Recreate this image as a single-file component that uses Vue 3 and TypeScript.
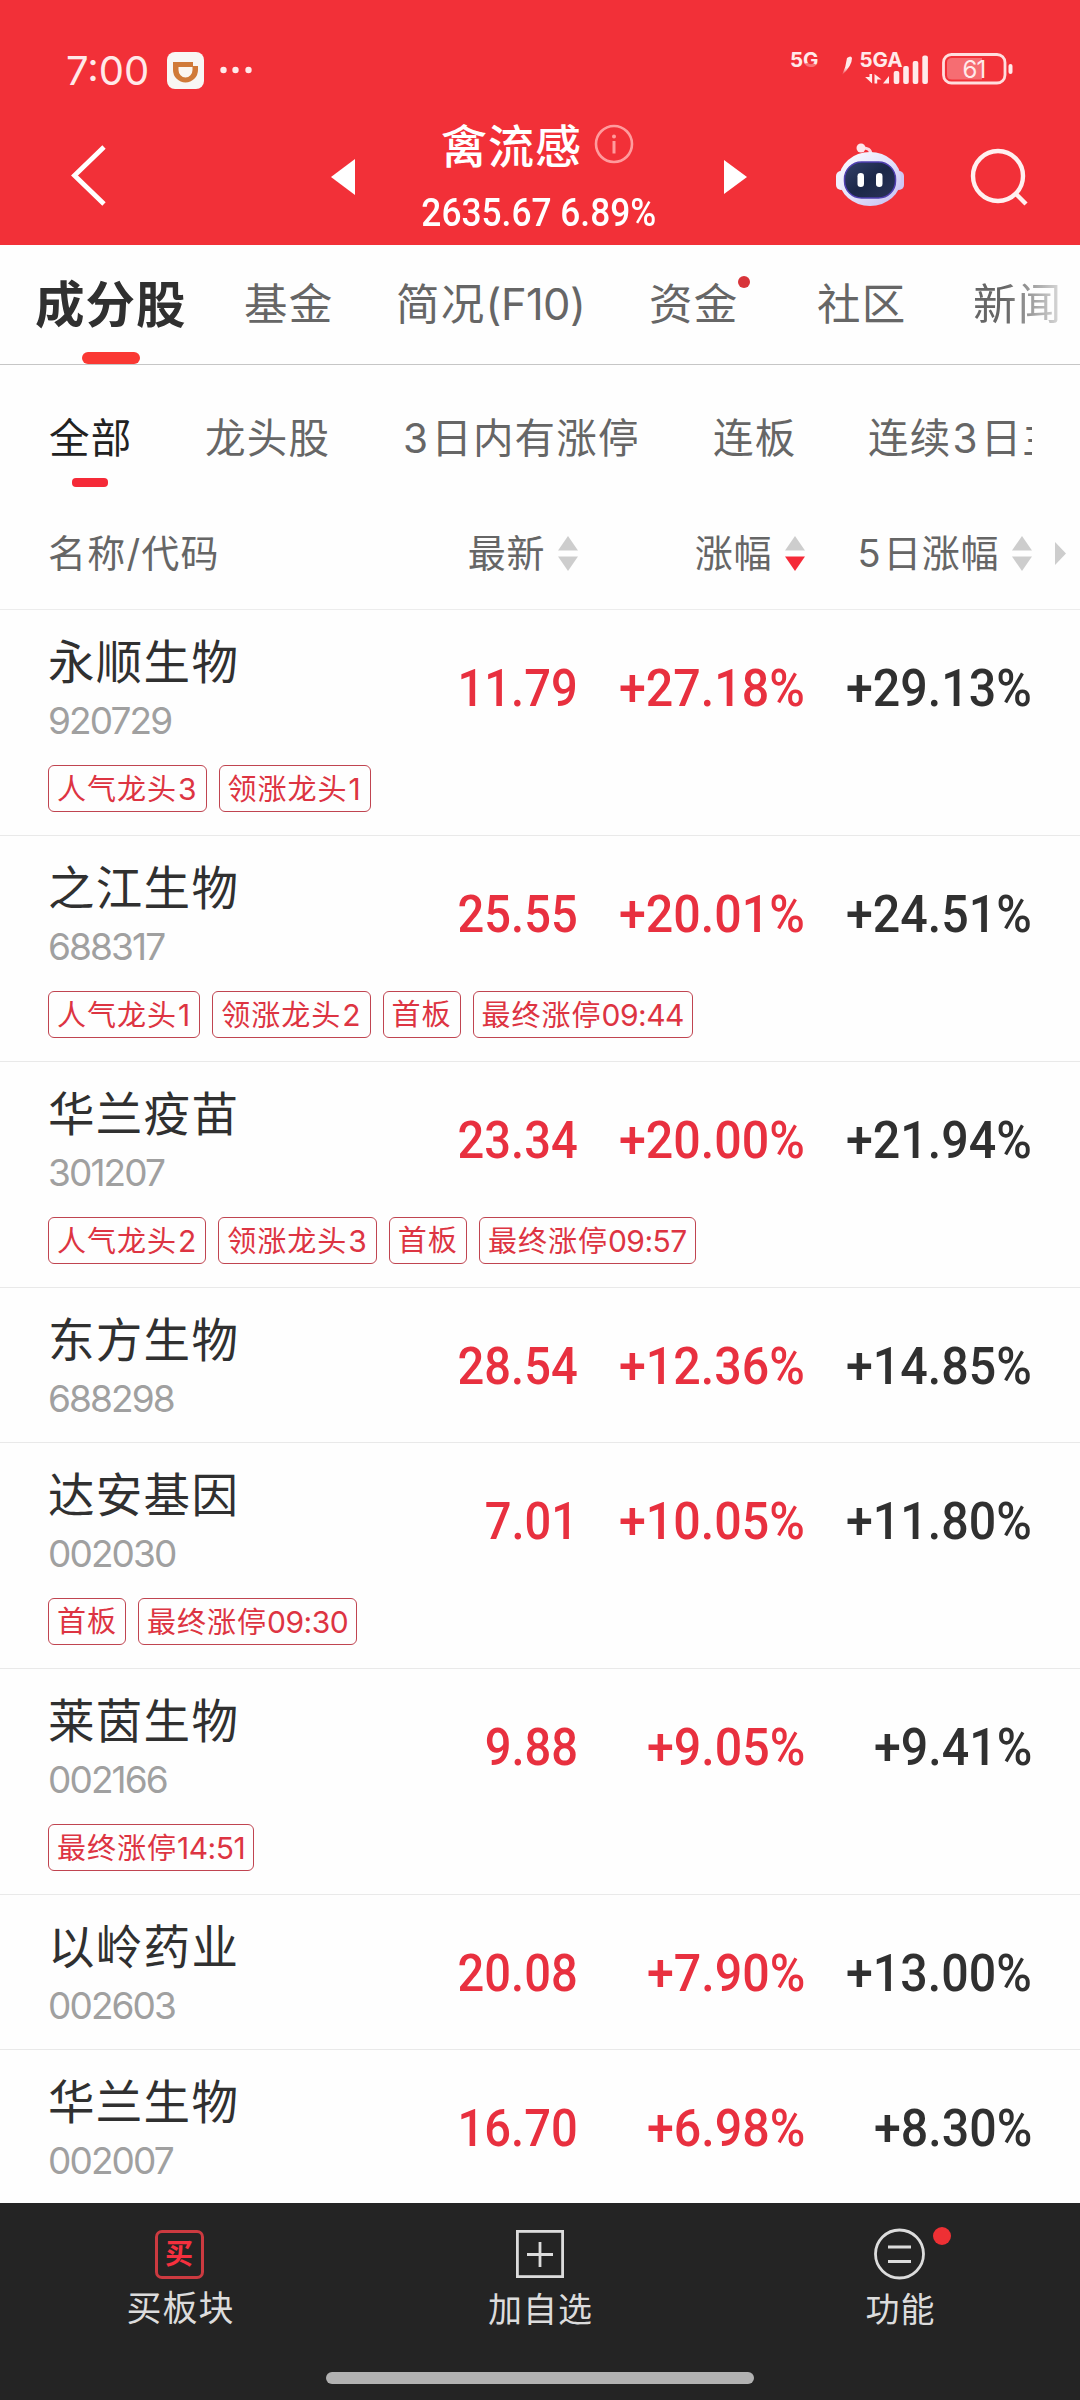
<script setup lang="ts">
interface Stock {
  name: string
  code: string
  price: string
  change: string
  change5: string
  tags: string[]
}

interface Segment {
  text: string
  latin: boolean
}

const tabs = [
  { label: '成分股', active: true },
  { label: '基金' },
  { label: '简况(F10)' },
  { label: '资金', dot: true },
  { label: '社区' },
  { label: '新闻' },
]

const filters = ['全部', '龙头股', '3日内有涨停', '连板', '连续3日主']

const columns = [
  { label: '最新', sorted: false },
  { label: '涨幅', sorted: true },
  { label: '5日涨幅', sorted: false },
]

const stocks: Stock[] = [
  { name: '永顺生物', code: '920729', price: '11.79', change: '+27.18%', change5: '+29.13%', tags: ['人气龙头3', '领涨龙头1'] },
  { name: '之江生物', code: '688317', price: '25.55', change: '+20.01%', change5: '+24.51%', tags: ['人气龙头1', '领涨龙头2', '首板', '最终涨停09:44'] },
  { name: '华兰疫苗', code: '301207', price: '23.34', change: '+20.00%', change5: '+21.94%', tags: ['人气龙头2', '领涨龙头3', '首板', '最终涨停09:57'] },
  { name: '东方生物', code: '688298', price: '28.54', change: '+12.36%', change5: '+14.85%', tags: [] },
  { name: '达安基因', code: '002030', price: '7.01', change: '+10.05%', change5: '+11.80%', tags: ['首板', '最终涨停09:30'] },
  { name: '莱茵生物', code: '002166', price: '9.88', change: '+9.05%', change5: '+9.41%', tags: ['最终涨停14:51'] },
  { name: '以岭药业', code: '002603', price: '20.08', change: '+7.90%', change5: '+13.00%', tags: [] },
  { name: '华兰生物', code: '002007', price: '16.70', change: '+6.98%', change5: '+8.30%', tags: [] },
]

// Splits a label into Chinese and Latin runs so each can be spaced separately.
function segments(label: string): Segment[] {
  return (label.match(/[\x20-\x7e]+|[^\x20-\x7e]+/g) ?? []).map((text) => ({
    text,
    latin: /^[\x20-\x7e]/.test(text),
  }))
}
</script>

<template>
  <div class="screen">
    <header class="top">
      <div class="status">
        <span class="clock">7:00</span>
        <svg class="app-badge" width="37" height="37" viewBox="0 0 37 37">
          <rect width="37" height="37" rx="8" fill="#f8f6f4" />
          <path d="M6 10H26V14H31V18A12.5 12.5 0 0 1 6 18Z" fill="#d07a38" />
          <path d="M11.500 15H25.500V18A7 7.500 0 0 1 11.500 18Z" fill="#fbf6f0" />
        </svg>
        <svg class="more" width="32" height="8" viewBox="0 0 32 8" fill="#ffe9e9">
          <circle cx="3.500" cy="4" r="3.200" /><circle cx="15.500" cy="4" r="3.200" /><circle cx="28.500" cy="4" r="3.200" />
        </svg>
        <svg class="signals" width="228" height="44" viewBox="788 46 228 44" fill="#ffeaea">
          <defs>
            <linearGradient id="fade" x1="0" y1="0" x2="0" y2="1">
              <stop offset="0.600" stop-color="#ffeaea" />
              <stop offset="1" stop-color="#f22f37" />
            </linearGradient>
          </defs>
          <text x="790" y="66.500" class="net">5G</text>
          <path d="M801 66Q808 60 817 65V70H799Z" fill="#f23038" opacity=".65" />
          <path d="M847 58Q851 55 852 58Q852 66 842 75Q846 67 847 58Z" fill="url(#fade)" />
          <text x="859.500" y="66.500" class="net">5GA</text>
          <path d="M869.500 74h2.600v9.500l-7-6.500h4.400zM874.500 74l7 5.500h-4.300v4h-2.700z" />
          <path d="M883 83.500L889 76v7.500z" />
          <rect x="893.700" y="71" width="5.600" height="13" rx="2" />
          <rect x="903.200" y="66" width="5.600" height="18" rx="2" />
          <rect x="912.700" y="61" width="5.600" height="23" rx="2" />
          <rect x="922.300" y="55.500" width="5.600" height="28.500" rx="2" />
          <rect x="943.500" y="54.500" width="61.500" height="28.500" rx="8" fill="none" stroke="#ffdede" stroke-width="2.800" />
          <path d="M952 58H982V79.500H952Q947 79.500 947 75V62.500Q947 58 952 58Z" opacity=".33" />
          <rect x="1008.500" y="64" width="4" height="10" rx="2" />
          <text x="962.500" y="78" class="level">61</text>
        </svg>
      </div>
      <div class="nav">
        <svg class="back" width="40" height="64" viewBox="0 0 40 64">
          <path d="M36 4L6.500 32.500L36 61" fill="none" stroke="#fff" stroke-width="4.800" />
        </svg>
        <svg class="prev" width="24" height="36" viewBox="0 0 24 36"><path d="M24 0V36L0 18Z" fill="#fff" /></svg>
        <div class="title">
          <div class="title-row">
            <h1>禽流感</h1>
            <svg width="40" height="40" viewBox="0 0 40 40">
              <circle cx="20" cy="20" r="18" fill="none" stroke="#ff9b9d" stroke-width="2.600" />
              <circle cx="20" cy="12.500" r="2" fill="#ff9b9d" />
              <path d="M20 17V29.500" stroke="#ff9b9d" stroke-width="3" />
            </svg>
          </div>
          <div class="index"><span>2635.67 6.89%</span></div>
        </div>
        <svg class="next" width="24" height="34" viewBox="0 0 24 34"><path d="M0 0L23 17L0 34Z" fill="#fff" /></svg>
        <svg class="robot" width="70" height="66" viewBox="0 0 70 66">
          <defs>
            <linearGradient id="shell" x1="0" y1="0" x2="1" y2="1">
              <stop offset="0" stop-color="#fff" />
              <stop offset=".5" stop-color="#e3e2fb" />
              <stop offset="1" stop-color="#c3bdf0" />
            </linearGradient>
            <linearGradient id="visor" x1="0" y1="0" x2="1" y2="1">
              <stop offset="0" stop-color="#33406a" />
              <stop offset=".5" stop-color="#1b2748" />
              <stop offset="1" stop-color="#2a3358" />
            </linearGradient>
          </defs>
          <path d="M26 6Q36 5 36 13" fill="none" stroke="#fbd9e4" stroke-width="3" />
          <circle cx="26" cy="6" r="4.500" fill="#fde6ec" />
          <rect x="1" y="29" width="10" height="19" rx="5" fill="#f1effd" />
          <rect x="59" y="29" width="10" height="19" rx="5" fill="#cfc6f3" />
          <ellipse cx="35" cy="37" rx="31" ry="27" fill="url(#shell)" />
          <rect x="9.500" y="20" width="51" height="36" rx="17" fill="url(#visor)" stroke="#4f3fb0" stroke-width="1.500" />
          <rect x="22.500" y="31" width="6.500" height="14" rx="3.200" fill="#fff" />
          <rect x="41" y="31" width="6.500" height="14" rx="3.200" fill="#fff" />
        </svg>
        <svg class="search" width="60" height="60" viewBox="0 0 60 60" fill="none" stroke="#fff0f0" stroke-width="4.400">
          <circle cx="29" cy="29" r="25" /><path d="M46 46L57 57" />
        </svg>
      </div>
    </header>

    <nav class="tabs">
      <div v-for="tab in tabs" :key="tab.label" class="tab" :class="{ active: tab.active }">
        <span class="tab-label">
          <span v-for="(s, i) in segments(tab.label)" :key="i" :class="{ paren: s.latin }">{{ s.text }}</span>
          <i v-if="tab.dot" class="dot"></i>
        </span>
      </div>
    </nav>

    <nav class="filters">
      <div v-for="(f, n) in filters" :key="f" class="filter" :class="{ active: n === 0 }">
        <span v-for="(s, i) in segments(f)" :key="i" :class="{ latin: s.latin }">{{ s.text }}</span>
      </div>
    </nav>

    <div class="head">
      <span class="head-name">名称/代码</span>
      <div v-for="c in columns" :key="c.label" class="head-col">
        <span><span v-for="(s, i) in segments(c.label)" :key="i" :class="{ latin: s.latin }">{{ s.text }}</span></span>
        <svg width="20" height="35" viewBox="0 0 20 35">
          <path d="M10 0L20 14.500H0Z" fill="#cdcdcd" />
          <path d="M0 20.500H20L10 35Z" :fill="c.sorted ? '#f52a38' : '#cdcdcd'" />
        </svg>
      </div>
      <svg class="scroll-hint" width="11" height="23" viewBox="0 0 11 23"><path d="M0 0L11 11.500L0 23Z" fill="#cdcdcd" /></svg>
    </div>

    <main class="list">
      <section v-for="s in stocks" :key="s.code" class="stock">
        <div class="main">
          <div class="ident">
            <div class="name">{{ s.name }}</div>
            <div class="code">{{ s.code }}</div>
          </div>
          <div class="num up price"><span>{{ s.price }}</span></div>
          <div class="num up"><span>{{ s.change }}</span></div>
          <div class="num"><span>{{ s.change5 }}</span></div>
        </div>
        <div v-if="s.tags.length" class="tags">
          <span v-for="t in s.tags" :key="t" class="tag">
            <span v-for="(g, i) in segments(t)" :key="i" :class="{ digits: g.latin, time: g.text.length > 1 && g.latin }">{{ g.text }}</span>
          </span>
        </div>
      </section>
    </main>

    <footer class="bar">
      <div class="actions">
        <div class="action">
          <span class="buy-icon">买</span>
          <span class="action-label buy-label">买板块</span>
        </div>
        <div class="action">
          <svg width="52" height="52" viewBox="0 0 52 52" fill="none" stroke="#dcdcdc" stroke-width="2.800">
            <rect x="3.400" y="3.400" width="45.200" height="45.200" /><path d="M26 14V39M13 26.500H39" />
          </svg>
          <span class="action-label">加自选</span>
        </div>
        <div class="action">
          <svg width="52" height="52" viewBox="0 0 52 52" fill="none" stroke="#dcdcdc" stroke-width="2.800">
            <circle cx="25.500" cy="26" r="24" /><path d="M14 19H37M14 33.500H37" />
          </svg>
          <i class="badge"></i>
          <span class="action-label">功能</span>
        </div>
      </div>
      <div class="home"></div>
    </footer>
  </div>
</template>

<style>
body {
  margin: 0;
  background: #fff;
}
</style>

<style scoped>
.screen {
  width: 1080px;
  height: 2400px;
  display: flex;
  flex-direction: column;
  overflow: hidden;
  background: #fefefe;
  font-family: Inter, "Noto Sans CJK SC", sans-serif;
  color: #303030;
}
.screen svg {
  display: block;
  flex: none;
}
.top {
  height: 245px;
  box-sizing: border-box;
  background: #f23038;
  color: #fff;
}
.status {
  height: 118px;
  padding: 46px 64px 0 66px;
  box-sizing: border-box;
  display: flex;
  align-items: flex-start;
}
.clock {
  width: 101px;
  font-size: 40px;
  line-height: 49px;
  color: #ffe9e9;
}
.app-badge {
  margin-top: 6px;
}
.more {
  margin: 20px 0 0 16px;
}
.signals {
  margin-left: auto;
}
.net {
  font: 700 20.500px Inter, sans-serif;
}
.level {
  font: 400 24px Inter, sans-serif;
  letter-spacing: -1px;
}
.nav {
  height: 127px;
  display: flex;
  align-items: flex-start;
  padding-left: 68px;
}
.back {
  margin-top: 25px;
}
.prev {
  margin: 41px 0 0 223px;
}
.title {
  width: 250px;
  margin-left: 59px;
}
.title-row {
  height: 52px;
  display: flex;
  align-items: center;
  gap: 12px;
  padding-left: 27px;
}
h1 {
  margin: 0;
  padding-top: 4px;
  font-size: 46px;
  font-weight: 500;
  line-height: 52px;
  letter-spacing: 1px;
}
.index {
  display: flex;
  justify-content: center;
  height: 72px;
  padding-top: 20px;
  box-sizing: border-box;
  font: 500 39px/46px Roboto, sans-serif;
  white-space: nowrap;
}
.index span {
  transform: scaleX(0.905);
}
.next {
  margin: 42px 0 0 60px;
}
.robot {
  margin: 24px 0 0 87px;
}
.search {
  margin: 29px 0 0 64px;
}
.tabs {
  height: 120px;
  box-sizing: border-box;
  border-bottom: 1px solid #c6c6c6;
  padding-left: 35px;
  display: grid;
  grid-template-columns: 209px 152px 253px 168px 156px 110px;
  overflow: hidden;
  color: #666;
  font-size: 43.500px;
  line-height: 118px;
  letter-spacing: 1.300px;
  white-space: nowrap;
}
.tab:last-child {
  width: 90px;
  mask-image: linear-gradient(90deg, #000 35%, rgba(0, 0, 0, 0.250) 96%);
}
.tab-label {
  position: relative;
}
.tab.active {
  color: #303030;
  font-size: 49.500px;
  font-weight: 700;
  letter-spacing: 1px;
  display: flex;
  flex-direction: column;
}
.tab.active .tab-label {
  height: 107px;
  line-height: 120px;
}
.tab.active::after {
  content: "";
  width: 58px;
  height: 12px;
  margin-left: 47px;
  border-radius: 6px;
  background: #fa3833;
}
.paren {
  letter-spacing: -0.600px;
}
.dot {
  position: absolute;
  left: 89px;
  top: -2px;
  width: 12px;
  height: 12px;
  border-radius: 50%;
  background: #d8343a;
}
.filters {
  width: 1032px;
  height: 145px;
  box-sizing: border-box;
  padding-left: 49px;
  display: grid;
  grid-template-columns: 156px 197px 311px 155px 213px;
  overflow: hidden;
  color: #666;
  font-size: 40.500px;
  line-height: 148px;
  letter-spacing: 1.200px;
  white-space: nowrap;
}
.filter.active {
  display: flex;
  flex-direction: column;
  color: #222;
}
.filter.active span {
  height: 113px;
}
.filter.active::after {
  content: "";
  width: 36px;
  height: 9px;
  margin-left: 23px;
  border-radius: 4px;
  background: #f52a38;
}
.latin {
  padding: 0 2px 0 1px;
}
.head {
  height: 100px;
  box-sizing: border-box;
  border-bottom: 1px solid #ececec;
  padding: 0 14px 12px 48px;
  display: flex;
  align-items: center;
  color: #666;
  font-size: 38px;
  line-height: 58px;
  letter-spacing: 0.600px;
}
.head > *,
.head-col > span {
  padding-bottom: 1px;
}
.head-name {
  width: 303px;
  letter-spacing: 1.200px;
}
.head-col {
  width: 227px;
  display: flex;
  justify-content: flex-end;
  align-items: center;
  gap: 13px;
  white-space: nowrap;
}
.scroll-hint {
  margin-left: 23px;
}
.list {
  height: 1593px;
  overflow: hidden;
}
.stock {
  border-bottom: 1px solid #e9e9e9;
}
.main {
  height: 154px;
  padding: 4px 48px 0;
  box-sizing: border-box;
  display: flex;
  align-items: center;
}
.ident {
  width: 303px;
}
.name {
  font-size: 46.500px;
  line-height: 60px;
  letter-spacing: 1.300px;
}
.code {
  padding-top: 3px;
  font-size: 37px;
  line-height: 52px;
  color: #a0a0a0;
  letter-spacing: -1.900px;
}
.num {
  width: 227px;
  display: flex;
  justify-content: flex-end;
  font: 500 52px/60px Roboto, sans-serif;
  white-space: nowrap;
}
.num span {
  transform: scaleX(0.930);
  transform-origin: right;
}
.num.price span {
  transform: scaleX(0.905);
}
.up {
  color: #e8303f;
}
.tags {
  display: flex;
  gap: 12px;
  padding: 1px 48px 23px;
}
.tag {
  height: 47px;
  box-sizing: border-box;
  padding: 0 8px;
  border: 1px solid #c04450;
  border-radius: 6px;
  color: #dd3442;
  font-size: 29px;
  line-height: 46px;
  letter-spacing: 1px;
  white-space: nowrap;
}
.digits {
  font-size: 30px;
  letter-spacing: 0;
  padding: 0 1px;
}
.digits.time {
  letter-spacing: -0.500px;
  padding: 0;
}
.bar {
  height: 197px;
  background: #242424;
  color: #dcdcdc;
}
.actions {
  height: 169px;
  display: grid;
  grid-template-columns: repeat(3, 1fr);
}
.action {
  position: relative;
  padding-top: 25px;
  display: flex;
  flex-direction: column;
  align-items: center;
}
.buy-icon {
  width: 49px;
  height: 49px;
  margin: 2px 0 1px -2px;
  box-sizing: border-box;
  border: 3px solid #cc3a40;
  border-radius: 7px;
  color: #f5303e;
  font-size: 28px;
  font-weight: 700;
  line-height: 43px;
  text-align: center;
}
.action-label {
  padding-left: 1px;
  font-size: 34px;
  line-height: 60px;
  letter-spacing: 1px;
}
.buy-label {
  font-size: 35px;
  line-height: 56px;
}
.badge {
  position: absolute;
  left: 213px;
  top: 24px;
  width: 18px;
  height: 18px;
  border-radius: 50%;
  background: #ee3034;
}
.home {
  width: 428px;
  height: 12px;
  margin: 0 auto;
  border-radius: 6px;
  background: #b2b2b2;
}
</style>
